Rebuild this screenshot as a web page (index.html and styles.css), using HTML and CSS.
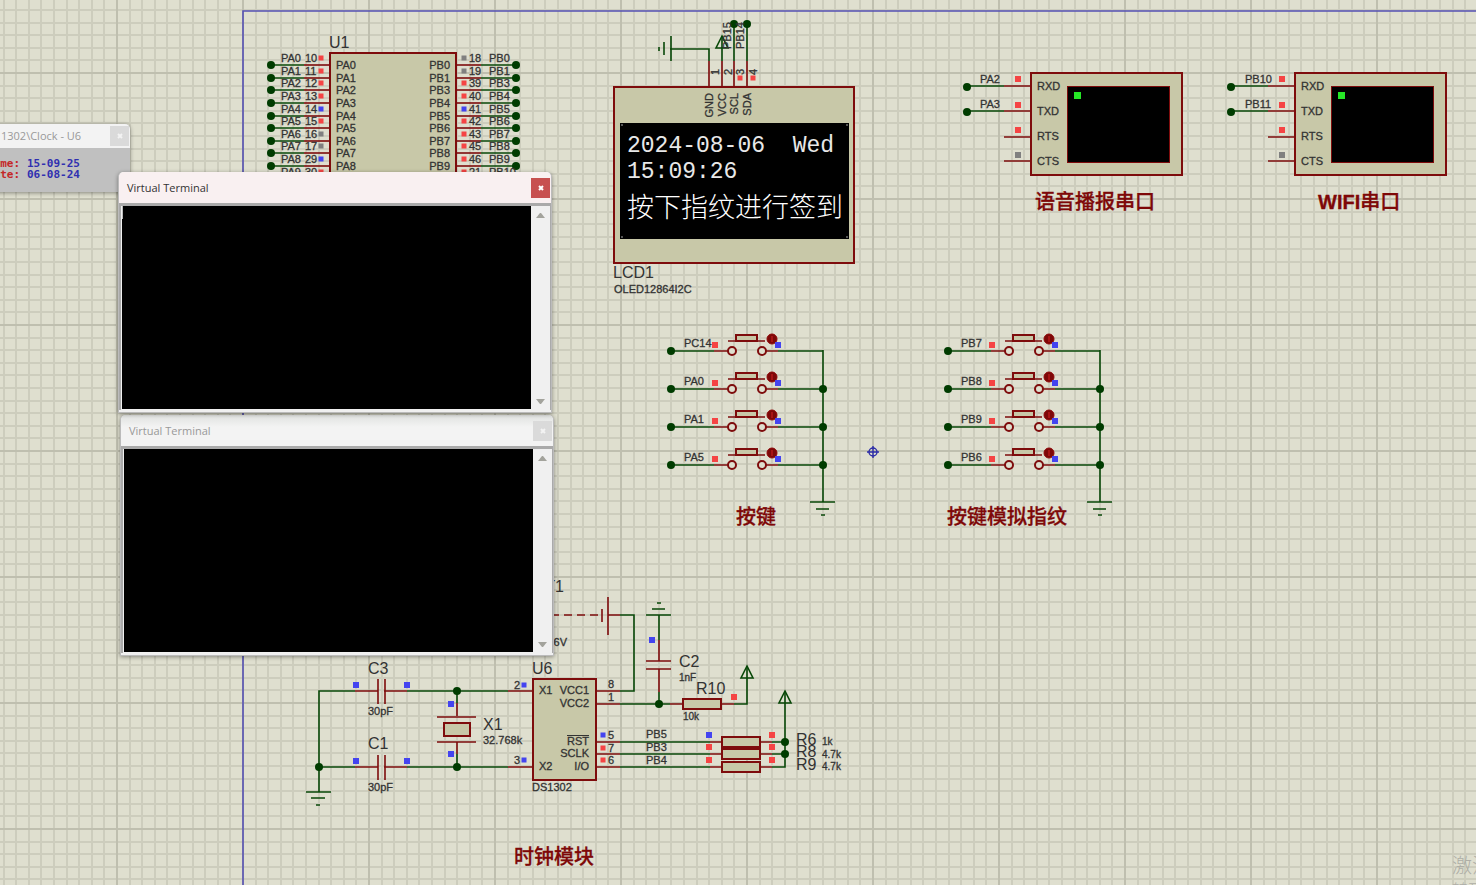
FILE: index.html
```html
<!DOCTYPE html>
<html lang="zh-CN">
<head>
<meta charset="utf-8">
<title>Schematic simulation</title>
<link rel="stylesheet" href="styles.css">
</head>
<body>
<main class="workspace">
<svg class="schematic" role="img" aria-label="Schematic">
  <defs>
    <pattern id="grid" x="116" y="72" width="126" height="126" patternUnits="userSpaceOnUse">
      <path class="grid-minor" d="M14 0V126M26 0V126M39 0V126M51 0V126M64 0V126M77 0V126M89 0V126M102 0V126M114 0V126M0 14H126M0 26H126M0 39H126M0 51H126M0 64H126M0 77H126M0 89H126M0 102H126M0 114H126"/>
      <path class="grid-major" d="M1 0V126M0 1H126"/>
    </pattern>
    <g id="pin-left"><path class="wire" d="M271 1H304"/><path class="lead" d="M304 1H329"/><circle class="dot" cx="271" cy="1" r="4"/></g>
    <g id="pin-right"><path class="lead" d="M456 1H481"/><path class="wire" d="M481 1H515"/><circle class="dot" cx="516" cy="1" r="4"/></g>
    <rect id="sq" x="-3" y="-3" width="6" height="6"/>
    <rect id="sq5" x="-2.5" y="-2.5" width="5" height="5"/>
    <g id="key">
      <path class="wire" d="M671 0H714M778 0H823"/>
      <path class="lead" d="M714 0H728M766 0H778M728 -10H765"/>
      <rect class="part" x="736" y="-16" width="21" height="6"/>
      <circle class="ring" cx="732" cy="0" r="4"/><circle class="ring" cx="762" cy="0" r="4"/>
      <circle class="dot" cx="671" cy="0" r="4"/>
      <circle class="knob" cx="772" cy="-12" r="5"/>
      <path class="knob-mark" d="M772 -15V-9"/>
      <use href="#sq" class="high" x="715" y="-6"/><use href="#sq" class="low" x="778" y="-6"/>
    </g>
    <g id="keys">
      <path class="wire" d="M823 350V502M810 502H835M816 509H829M821 515H825"/>
      <use href="#key" y="351"/><use href="#key" y="389"/><use href="#key" y="427"/><use href="#key" y="465"/>
      <circle class="dot" cx="823" cy="389" r="4"/><circle class="dot" cx="823" cy="427" r="4"/><circle class="dot" cx="823" cy="465" r="4"/>
    </g>
    <g id="serial">
      <rect class="part" x="1031" y="73" width="151" height="102"/>
      <rect class="tube" x="1067.5" y="86.5" width="102" height="76"/>
      <rect class="led" x="1074" y="92" width="7" height="7"/>
      <path class="wire" d="M967 86H1004M967 111H1004"/>
      <path class="lead" d="M1004 86H1030M1004 111H1030M1004 137H1030M1004 161H1030"/>
      <circle class="dot" cx="967" cy="87" r="4"/><circle class="dot" cx="967" cy="112" r="4"/>
      <use href="#sq" class="high" x="1018" y="79"/><use href="#sq" class="high" x="1018" y="105"/><use href="#sq" class="high" x="1018" y="130"/><use href="#sq" class="idle" x="1018" y="155"/>
      <text x="1037" y="90">RXD</text><text x="1037" y="115">TXD</text><text x="1037" y="140">RTS</text><text x="1037" y="165">CTS</text>
    </g>
    <g id="cap"><path class="lead" d="M355 0H378M384 0H407M378 -12V13M385 -12V13"/><use href="#sq" class="low" x="356" y="-6"/><use href="#sq" class="low" x="407" y="-6"/></g>
    <rect id="res" class="part" x="0" y="-5" width="38" height="10"/>
    <path id="power" class="wire hollow" d="M0 -12L-6 0H6Z"/>
  </defs>

  <rect width="100%" height="100%" fill="url(#grid)"/>
  <svg x="242" y="10" width="100%" height="100%"><path class="sheet" d="M1 4000V1H8000"/></svg>

  <!-- U1 microcontroller -->
  <g>
    <rect class="part" x="330" y="53" width="126" height="150"/>
    <text class="ref" x="329" y="48">U1</text>
    <g transform="translate(0 64)"><use href="#pin-left"/><use href="#pin-right"/><use href="#sq5" class="high" x="321" y="-6"/><use href="#sq5" class="idle" x="464" y="-6"/><text x="281" y="-2">PA0</text><text x="305" y="-2">10</text><text x="336" y="5">PA0</text><text class="end" x="450" y="5">PB0</text><text x="469" y="-2">18</text><text x="489" y="-2">PB0</text></g>
    <g transform="translate(0 77)"><use href="#pin-left"/><use href="#pin-right"/><use href="#sq5" class="high" x="321" y="-6"/><use href="#sq5" class="idle" x="464" y="-6"/><text x="281" y="-2">PA1</text><text x="305" y="-2">11</text><text x="336" y="5">PA1</text><text class="end" x="450" y="5">PB1</text><text x="469" y="-2">19</text><text x="489" y="-2">PB1</text></g>
    <g transform="translate(0 89)"><use href="#pin-left"/><use href="#pin-right"/><use href="#sq5" class="high" x="321" y="-6"/><use href="#sq5" class="high" x="464" y="-6"/><text x="281" y="-2">PA2</text><text x="305" y="-2">12</text><text x="336" y="5">PA2</text><text class="end" x="450" y="5">PB3</text><text x="469" y="-2">39</text><text x="489" y="-2">PB3</text></g>
    <g transform="translate(0 102)"><use href="#pin-left"/><use href="#pin-right"/><use href="#sq5" class="high" x="321" y="-6"/><use href="#sq5" class="high" x="464" y="-6"/><text x="281" y="-2">PA3</text><text x="305" y="-2">13</text><text x="336" y="5">PA3</text><text class="end" x="450" y="5">PB4</text><text x="469" y="-2">40</text><text x="489" y="-2">PB4</text></g>
    <g transform="translate(0 115)"><use href="#pin-left"/><use href="#pin-right"/><use href="#sq5" class="low" x="321" y="-6"/><use href="#sq5" class="low" x="464" y="-6"/><text x="281" y="-2">PA4</text><text x="305" y="-2">14</text><text x="336" y="5">PA4</text><text class="end" x="450" y="5">PB5</text><text x="469" y="-2">41</text><text x="489" y="-2">PB5</text></g>
    <g transform="translate(0 127)"><use href="#pin-left"/><use href="#pin-right"/><use href="#sq5" class="high" x="321" y="-6"/><use href="#sq5" class="high" x="464" y="-6"/><text x="281" y="-2">PA5</text><text x="305" y="-2">15</text><text x="336" y="5">PA5</text><text class="end" x="450" y="5">PB6</text><text x="469" y="-2">42</text><text x="489" y="-2">PB6</text></g>
    <g transform="translate(0 140)"><use href="#pin-left"/><use href="#pin-right"/><use href="#sq5" class="idle" x="321" y="-6"/><use href="#sq5" class="high" x="464" y="-6"/><text x="281" y="-2">PA6</text><text x="305" y="-2">16</text><text x="336" y="5">PA6</text><text class="end" x="450" y="5">PB7</text><text x="469" y="-2">43</text><text x="489" y="-2">PB7</text></g>
    <g transform="translate(0 152)"><use href="#pin-left"/><use href="#pin-right"/><use href="#sq5" class="idle" x="321" y="-6"/><use href="#sq5" class="high" x="464" y="-6"/><text x="281" y="-2">PA7</text><text x="305" y="-2">17</text><text x="336" y="5">PA7</text><text class="end" x="450" y="5">PB8</text><text x="469" y="-2">45</text><text x="489" y="-2">PB8</text></g>
    <g transform="translate(0 165)"><use href="#pin-left"/><use href="#pin-right"/><use href="#sq5" class="low" x="321" y="-6"/><use href="#sq5" class="high" x="464" y="-6"/><text x="281" y="-2">PA8</text><text x="305" y="-2">29</text><text x="336" y="5">PA8</text><text class="end" x="450" y="5">PB9</text><text x="469" y="-2">46</text><text x="489" y="-2">PB9</text></g>
    <g transform="translate(0 178)"><use href="#sq5" class="high" x="321" y="-6"/><use href="#sq5" class="high" x="464" y="-6"/><text x="281" y="-2">PA9</text><text x="305" y="-2">30</text><text x="469" y="-2">21</text><text x="489" y="-2">PB10</text></g>
  </g>

  <!-- OLED display -->
  <g>
    <rect class="part" x="614" y="87" width="240" height="176"/>
    <path class="wire" d="M709 61V49H670M671 36V61M664 42V55M659 47V51M722 61V36M734 24V61M747 24V61"/>
    <path class="lead" d="M709 61V86M722 61V86M734 61V86M747 61V86"/>
    <use href="#power" x="722" y="48"/>
    <circle class="dot" cx="734" cy="24" r="4"/><circle class="dot" cx="747" cy="24" r="4"/>
    <g transform="rotate(-90)">
      <text x="-49" y="731">PB15</text><text x="-49" y="744">PB14</text>
      <text x="-75" y="719">1</text><text x="-75" y="732">2</text><text x="-75" y="744">3</text><text x="-75" y="757">4</text>
      <text class="end" x="-93" y="713">GND</text><text class="end" x="-93" y="726">VCC</text><text class="end" x="-93" y="738">SCL</text><text class="end" x="-93" y="751">SDA</text>
    </g>
    <use href="#sq5" class="high" x="740" y="78"/><use href="#sq5" class="high" x="753" y="78"/>
    <rect class="oled" x="620" y="123" width="229" height="116"/>
    <path class="oled-corner" d="M621 125h2M846 125h2M621 237h2M846 237h2"/>
    <text class="oled-text" x="627" y="152">2024-08-06&#160; Wed</text>
    <text class="oled-text" x="627" y="178">15:09:26</text>
    <text class="oled-cjk" x="627" y="217">按下指纹进行签到</text>
    <text class="ref" x="613" y="278">LCD1</text>
    <text x="614" y="293">OLED12864I2C</text>
  </g>

  <!-- Serial terminals -->
  <use href="#serial"/>
  <use href="#serial" x="264"/>
  <text x="980" y="83">PA2</text><text x="980" y="108">PA3</text>
  <text x="1245" y="83">PB10</text><text x="1245" y="108">PB11</text>
  <text class="title" x="1035" y="209">语音播报串口</text>
  <text class="title" x="1318" y="209"><tspan class="latin">WIFI</tspan>串口</text>

  <!-- Push buttons -->
  <use href="#keys"/>
  <use href="#keys" x="277"/>
  <text x="684" y="347">PC14</text><text x="684" y="385">PA0</text><text x="684" y="423">PA1</text><text x="684" y="461">PA5</text>
  <text x="961" y="347">PB7</text><text x="961" y="385">PB8</text><text x="961" y="423">PB9</text><text x="961" y="461">PB6</text>
  <text class="title" x="736" y="524">按键</text>
  <text class="title" x="947" y="524">按键模拟指纹</text>
  <g class="origin"><circle cx="873" cy="452" r="4"/><path d="M867 452H879M873 446V458"/></g>

  <!-- Clock module -->
  <g>
    <path class="wire" d="M355 691H319V792M319 767H355M407 691H508M407 767H508M306 792H331M311 798H325M316 805H320M457 691V703M457 754V767"/>
    <path class="lead" d="M508 691H532M508 767H532M457 703V716M457 742V754M437 717H476M437 742H476"/>
    <use href="#cap" y="691"/><use href="#cap" y="767"/>
    <rect class="part" x="444" y="723" width="26" height="13"/>
    <circle class="dot" cx="457" cy="691" r="4"/><circle class="dot" cx="457" cy="767" r="4"/><circle class="dot" cx="319" cy="767" r="4"/>
    <use href="#sq" class="low" x="451" y="704"/><use href="#sq" class="low" x="451" y="754"/>
    <use href="#sq5" class="low" x="524" y="685"/><use href="#sq5" class="low" x="524" y="760"/>
    <text class="ref" x="368" y="674">C3</text><text x="368" y="715">30pF</text>
    <text class="ref" x="368" y="749">C1</text><text x="368" y="791">30pF</text>
    <text class="ref" x="483" y="730">X1</text><text x="483" y="744">32.768k</text>
    <text x="514" y="689">2</text><text x="514" y="764">3</text>
    <text class="ref" x="532" y="674">U6</text>
    <rect class="part" x="533" y="679" width="63" height="101"/>
    <text x="539" y="694">X1</text><text x="539" y="770">X2</text>
    <text class="end" x="589" y="694">VCC1</text><text class="end" x="589" y="707">VCC2</text><text class="end" x="589" y="745">RST</text><text class="end" x="589" y="757">SCLK</text><text class="end" x="589" y="770">I/O</text>
    <path class="overline" d="M567 735.5H589"/>
    <text x="532" y="791">DS1302</text>

    <path class="lead dashed" d="M554 615H598"/>
    <path class="lead" d="M602 609V622M608 597V635M608 615H620M596 691H620M596 704H620"/>
    <path class="wire" d="M620 615H634V691H620M620 704H670M659 704V692M659 640V615M646 615H671M652 609H665M657 603H661"/>
    <path class="lead" d="M659 640V661M659 669V692M646 661H671M646 669H671M670 704H683M722 704H734"/>
    <text class="ref end" x="564" y="592">BT1</text><text class="end" x="567" y="646">3.6V</text>
    <text x="608" y="688">8</text><text x="608" y="701">1</text>
    <circle class="dot" cx="659" cy="704" r="4"/>
    <use href="#sq" class="low" x="652" y="640"/>
    <text class="ref" x="679" y="667">C2</text><text class="small" x="679" y="681">1nF</text>
    <use href="#res" x="683" y="704"/><use href="#sq" class="high" x="734" y="697"/>
    <text class="ref" x="696" y="694">R10</text><text class="small" x="683" y="720">10k</text>
    <path class="wire" d="M734 704H747V666"/><use href="#power" x="747" y="678"/>

    <path class="lead" d="M596 742H620M596 754H620M596 767H620M710 742H772M710 754H772M710 767H772"/>
    <path class="wire" d="M620 742H710M620 754H710M620 767H710M772 742H785M772 754H785M772 767H785V692"/>
    <use href="#power" x="785" y="703"/>
    <use href="#res" x="722" y="742"/><use href="#res" x="722" y="754"/><use href="#res" x="722" y="767"/>
    <circle class="dot" cx="785" cy="742" r="4"/><circle class="dot" cx="785" cy="754" r="4"/>
    <use href="#sq5" class="low" x="603" y="735"/><use href="#sq5" class="high" x="603" y="748"/><use href="#sq5" class="high" x="603" y="760"/>
    <use href="#sq" class="low" x="709" y="735"/><use href="#sq" class="high" x="709" y="747"/><use href="#sq" class="high" x="709" y="760"/>
    <use href="#sq" class="high" x="772" y="735"/><use href="#sq" class="high" x="772" y="747"/><use href="#sq" class="high" x="772" y="760"/>
    <text x="608" y="739">5</text><text x="608" y="752">7</text><text x="608" y="764">6</text>
    <text x="646" y="738">PB5</text><text x="646" y="751">PB3</text><text x="646" y="764">PB4</text>
    <text class="ref" x="796" y="745">R6</text><text class="ref" x="796" y="757">R8</text><text class="ref" x="796" y="770">R9</text>
    <text class="small" x="822" y="745">1k</text><text class="small" x="822" y="758">4.7k</text><text class="small" x="822" y="770">4.7k</text>
    <text class="title" x="514" y="864">时钟模块</text>
  </g>
</svg>

<section class="window clock-window" aria-label="Clock">
  <header class="bar"><h2 class="caption">1302\Clock - U6</h2><button class="close" type="button" aria-label="Close"><svg viewBox="0 0 6 6"><path d="M1 1L5 5M5 1L1 5"/></svg></button></header>
  <dl class="readout"><dt>Time:</dt><dd>15-09-25</dd><dt>Date:</dt><dd>06-08-24</dd></dl>
</section>

<section class="window terminal second" aria-label="Virtual Terminal 2">
  <header class="bar"><h2 class="caption">Virtual Terminal</h2><button class="close" type="button" aria-label="Close"><svg viewBox="0 0 6 6"><path d="M1 1L5 5M5 1L1 5"/></svg></button></header>
  <div class="console"><div class="screen"></div>
    <div class="scroll"><button type="button" aria-label="Scroll up"><svg viewBox="0 0 9 7"><path d="M0 6L4 1H5L9 6Z"/></svg></button><button type="button" aria-label="Scroll down"><svg viewBox="0 0 9 7"><path d="M0 1L4 6H5L9 1Z"/></svg></button></div>
  </div>
</section>

<section class="window terminal first active" aria-label="Virtual Terminal 1">
  <header class="bar"><h2 class="caption">Virtual Terminal</h2><button class="close" type="button" aria-label="Close"><svg viewBox="0 0 6 6"><path d="M1 1L5 5M5 1L1 5"/></svg></button></header>
  <div class="console"><div class="screen"><span class="cursor"></span></div>
    <div class="scroll"><button type="button" aria-label="Scroll up"><svg viewBox="0 0 9 7"><path d="M0 6L4 1H5L9 6Z"/></svg></button><button type="button" aria-label="Scroll down"><svg viewBox="0 0 9 7"><path d="M0 1L4 6H5L9 1Z"/></svg></button></div>
  </div>
</section>

<aside class="watermark"><p>激活</p><p class="hint">转到</p></aside>
</main>
</body>
</html>
```
FILE: styles.css
```css
* { box-sizing: border-box; }
body { margin: 0; background: #dfdfcf; font-family: "Liberation Sans", "Noto Sans CJK SC", sans-serif; }
.workspace { position: relative; height: 100vh; overflow: hidden; }

/* schematic */
.schematic { display: block; width: 100%; height: 100%; }
.schematic text { font-size: 11px; fill: #333; stroke: #333; stroke-width: 0.3; }
.schematic .ref { font-size: 16px; stroke: none; }
.schematic .small { font-size: 10px; }
.schematic .end { text-anchor: end; }
.schematic .title { font-family: "Noto Sans CJK SC", sans-serif; font-size: 20px; font-weight: 500; fill: #7e0808; stroke: #7e0808; }
.schematic .latin { font-family: "Liberation Sans", sans-serif; font-weight: 700; }
.schematic .oled-text { font-family: "Liberation Mono", monospace; font-size: 23px; fill: #e8e8e8; stroke: none; }
.schematic .oled-cjk { font-family: "Noto Sans CJK SC", sans-serif; font-size: 27px; font-weight: 300; fill: #fff; stroke: none; }
.grid-minor { fill: none; stroke: #cdcdbd; stroke-width: 2; }
.grid-major { fill: none; stroke: #bfbfaf; stroke-width: 2; }
.sheet { fill: none; stroke: #5652b4; stroke-width: 1.6; }
.wire { fill: none; stroke: #084808; stroke-width: 1.6; }
.lead { fill: none; stroke: #7e0c0c; stroke-width: 1.6; }
.dashed { stroke-dasharray: 8 5; stroke-dashoffset: 3; }
.overline { stroke: #333; stroke-width: 1; }
.dot { fill: #003c00; }
.part { fill: #c8c8a8; stroke: #7e0c0c; stroke-width: 2; }
.ring { fill: #dfdfcf; stroke: #7e0c0c; stroke-width: 2; }
.knob { fill: #7e0808; stroke: #8e0808; }
.knob-mark { fill: none; stroke: #d02020; }
.high { fill: #f54444; }
.low { fill: #4444f0; }
.idle { fill: #808080; }
.tube { fill: #000; stroke: #7e0c0c; }
.led { fill: #26e626; }
.oled { fill: #000; }
.oled-corner { stroke: #aaa; stroke-width: 1; }
.origin { fill: none; stroke: #2c2ca8; stroke-width: 1.4; }

/* floating windows */
.window { position: absolute; display: flex; flex-direction: column; border-radius: 5px 5px 0 0; box-shadow: 0 1px 4px #0006; }
.bar { display: flex; align-items: center; justify-content: space-between; background: #f3f3f3; color: #999; border-radius: 5px 5px 0 0; }
.caption { margin: 0; font: 400 11px/16px "Open Sans", "Noto Sans", sans-serif; white-space: nowrap; }
.close { display: grid; place-items: center; width: 19px; height: 20px; padding: 0; border: 0; background: #dadada; }
.close svg { width: 6px; height: 6px; }
.close path { fill: none; stroke: #f3f3f3; stroke-width: 2; }

.clock-window { left: -120px; top: 124px; width: 250px; background: #c0c0c0; }
.clock-window .bar { height: 24px; padding: 0 1px 0 121px; }
.readout { display: grid; grid-template-columns: 40px auto; margin: 0; padding: 10px 0 12px 107px; font: 700 11px/11px "DejaVu Sans Mono", monospace; }
.readout dt { color: #c42828; }
.readout dd { margin: 0; color: #3030b0; }

.terminal { width: 434px; background: #f0f0f0; border: 1px solid #bbb; border-top: 0; }
.terminal .bar { height: 31px; padding: 0 1px 0 8px; }
.first { left: 118px; top: 172px; }
.second { left: 120px; top: 415px; }
.second .bar { background: linear-gradient(#e0e2e0, #f3f3f3 12px); }
.console { display: flex; height: 207px; margin-bottom: 2px; border: 2px solid #aaa; border-top-width: 3px; border-right-width: 1px; border-bottom: 0; }
.screen { flex: 1; background: #000; margin: 0 0 1px 1px; }
.cursor { display: block; width: 1px; height: 13px; background: #bbb; }
.scroll { display: flex; flex-direction: column; justify-content: space-between; width: 19px; background: #f0f0f0; }
.scroll button { display: grid; place-items: center; height: 18px; padding: 0; border: 0; background: none; }
.scroll svg { width: 9px; height: 7px; fill: #a3a39c; }
.active .bar { background: #f9f0f1; color: #333; }
.active .close { background: #c75050; }
.active .close path { stroke: #fff; }

.watermark { position: absolute; left: 1452px; top: 851px; color: #aeaea6; white-space: nowrap; font-family: "Noto Sans CJK SC", sans-serif; }
.watermark p { margin: 0; font-size: 20px; line-height: 28px; font-weight: 300; }
.watermark .hint { font-size: 16px; line-height: 20px; }
```
